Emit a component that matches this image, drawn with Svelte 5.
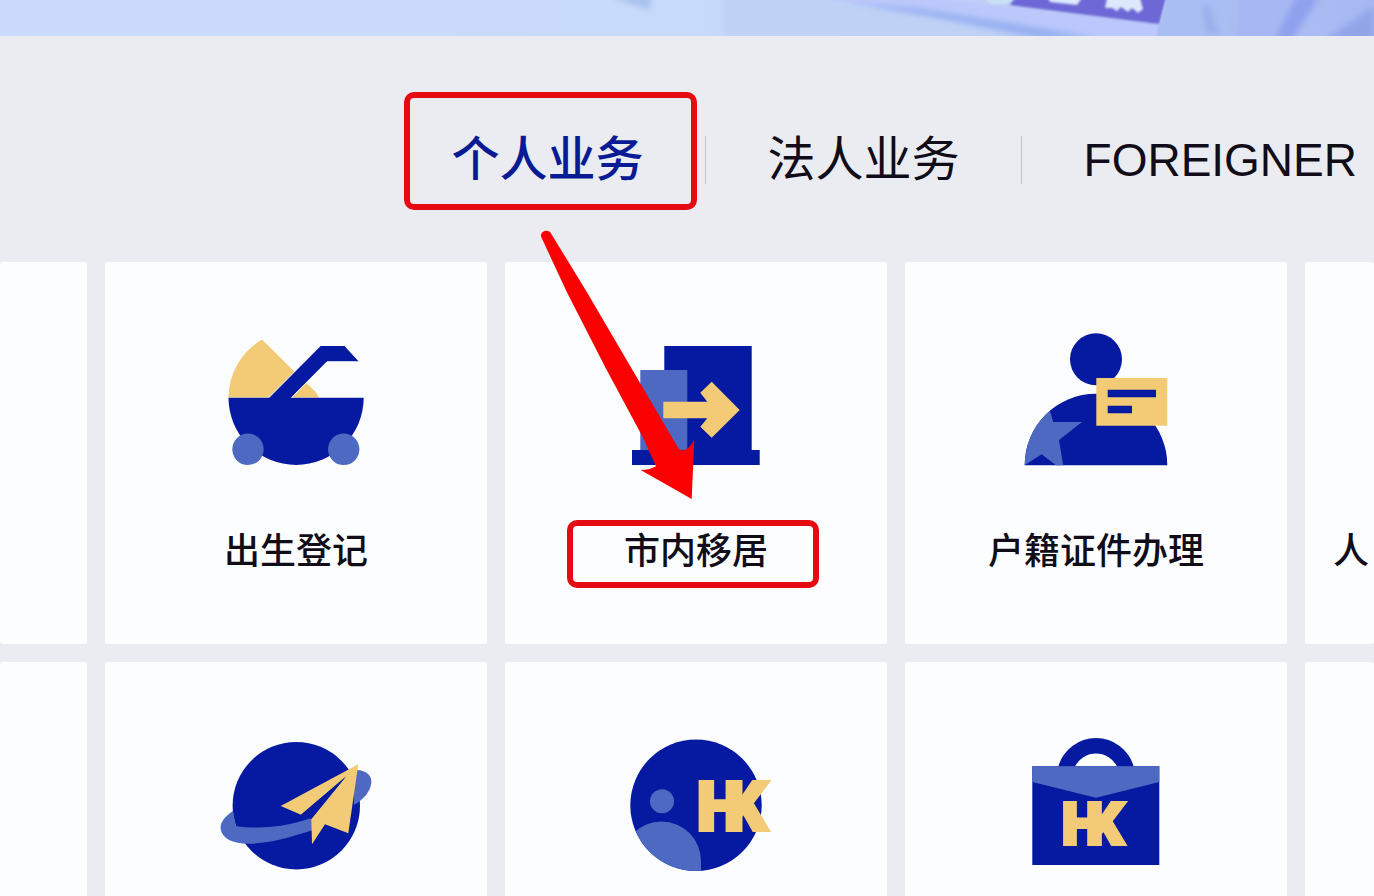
<script>
    let tabs = ['个人业务', '法人业务', 'FOREIGNER']
    let selectedTab = $state('个人业务')

    // the outer cards run off both sides of the page
    const services = [
        { icon: '', label: '' },
        { icon: 'pram', label: '出生登记' },
        { icon: 'door', label: '市内移居', marked: true },
        { icon: 'person', label: '户籍证件办理' },
        { icon: '', label: '人', cut: true },
        { icon: '', label: '' },
        { icon: 'planet', label: '' },
        { icon: 'traveller', label: '' },
        { icon: 'bag', label: '' },
        { icon: '', label: '' },
    ]
</script>

<div class="page">
    <header class="banner">
        <svg viewBox="0 0 1374 36" preserveAspectRatio="none" aria-hidden="true">
            <defs>
                <linearGradient id="sky" x1="0" x2="1" y1="0" y2="0">
                    <stop offset="0" stop-color="#cbdafc" />
                    <stop offset="0.5" stop-color="#c8dafa" />
                    <stop offset="0.75" stop-color="#bdcdf6" />
                    <stop offset="1" stop-color="#a5b8f2" />
                </linearGradient>
                <filter id="soft" x="-10%" y="-50%" width="120%" height="200%">
                    <feGaussianBlur stdDeviation="3" />
                </filter>
                <filter id="edge" x="-5%" y="-20%" width="110%" height="140%">
                    <feGaussianBlur stdDeviation="1" />
                </filter>
            </defs>
            <rect width="1374" height="36" fill="url(#sky)" />
            <path d="M608 -6L652 -6L650 10L630 4Z" fill="#a9c1ef" filter="url(#soft)" />
            <path d="M724 -4L840 -4L1010 36L724 36Z" fill="#bfd1f4" filter="url(#soft)" />
            <path d="M820 -2L930 -2L1158 24L1156 40L1070 40Z" fill="#bcc8fb" filter="url(#edge)" />
            <path d="M850 3L920 9L1100 38L1040 38L930 16Z" fill="#91aef0" filter="url(#soft)" />
            <path d="M1015 -2H1166L1159 24L1010 5Z" fill="#6d68d6" filter="url(#edge)" />
            <path d="M985 -2H1014L1006 4H990Z" fill="#c9e1f3" filter="url(#edge)" />
            <path d="M1048 -2H1082L1077 5L1050 2Z" fill="#dce8fb" filter="url(#edge)" />
            <path d="M1107 -2H1140L1143 9L1138 13L1132 8L1128 12L1121 7L1117 11L1112 8L1105 8Z" fill="#dce8fb" filter="url(#edge)" />
            <path d="M1166 -2H1234V38H1156Z" fill="#a9bef3" />
            <path d="M1202 8L1210 4L1214 22L1220 34H1207Z" fill="#99afea" filter="url(#soft)" />
            <path d="M1236 -4H1292L1274 40H1234Z" fill="#a6b7f4" filter="url(#soft)" />
            <path d="M1296 -4L1320 -4L1292 40L1274 40Z" fill="#8fa0ed" filter="url(#soft)" />
            <path d="M1374 6L1374 40L1325 40Z" fill="#91a4e8" filter="url(#soft)" />
        </svg>
    </header>

    <nav class="tabs">
        {#each tabs as tab, i}
            <button
                class="tab"
                class:selected={tab===selectedTab}
                class:latin={tab==='FOREIGNER'}
                onclick={()=>selectedTab=tab}
                >
                {tab}
                {#if i === 0}
                    <span class="mark tab-mark"></span>
                {/if}
            </button>
        {/each}
    </nav>

    <main class="services">
        {#each services as service}
            <a class="card" href="#service" aria-label={service.label || service.icon || 'service'}>
                <svg class="icon" viewBox="0 0 160 160" aria-hidden="true">
                    {#if service.icon === 'pram'}
                        <path class="gold" d="M12.5 75.5A67.5 67.5 0 0 1 46 17.5L90 61Q100 69 103 75.5Z" />
                        <path class="navy handle" d="M48.5 80L104.7 23.5H128.5L143.5 39.8H111L71 80Z" />
                        <path class="navy" d="M12.5 75.7H147.7A67.6 67.2 0 0 1 12.5 75.7Z" />
                        <circle class="blue" cx="32" cy="127.3" r="15.7" />
                        <circle class="blue" cx="127.7" cy="127.3" r="15.7" />
                    {:else if service.icon === 'door'}
                        <path class="navy" d="M48.3 24H135.7V128H143.7V143H16V128H48.3Z" />
                        <path class="blue" d="M24.3 48H71.3V128H24.3Z" />
                        <path class="gold" d="M47.3 79.7H91.3L84.3 70.7L95.7 59.7L123.7 88L95.7 115.7L84.3 104.7L91.3 96.3H47.3Z" />
                    {:else if service.icon === 'person'}
                        <clipPath id="shoulders">
                            <path d="M8.7 143.3A71.3 71.6 0 0 1 151.3 143.3Z" />
                        </clipPath>
                        <circle class="navy" cx="80" cy="37.3" r="26" />
                        <path class="navy" d="M8.7 143.3A71.3 71.6 0 0 1 151.3 143.3Z" />
                        <path class="blue" clip-path="url(#shoulders)" d="M33 86L37.3 100H66L43 118L47.3 144H41L25.7 132.3L9 143L0 143V86Z" />
                        <path class="gold" d="M80.3 56H151.3V103.7H80.3Z" />
                        <path class="navy" d="M91.7 67.7H140V75.3H91.7ZM91.7 83.7H116V91.3H91.7Z" />
                    {:else if service.icon === 'planet'}
                        <circle class="navy" cx="80.3" cy="83.7" r="63.7" />
                        <path class="blue" d="M17 89C8 95 4 101 4.7 107C6 117 18 122.5 36 121.7C58 120.5 78 114 97 108V95.3C75 104 45 108 20 104Q18 96 17 89Z" />
                        <path class="blue" d="M138 48H142C151 49 156 54 155.3 61C154 70 148 77 138 83Z" />
                        <path class="gold" d="M142.3 42.3L64.7 84L85 92.7L129.7 54.7L95.3 97L96 122.3L109 102.3L132.3 111.3Z" />
                        <path class="navy" d="M85 92.7L88 94.5L95.3 97L130 54.4Z" />
                    {:else if service.icon === 'traveller'}
                        <clipPath id="globe">
                            <circle cx="80" cy="83.3" r="65.7" />
                        </clipPath>
                        <circle class="navy" cx="80" cy="83.3" r="65.7" />
                        <circle class="blue" cx="46" cy="79.3" r="12" />
                        <path class="blue" clip-path="url(#globe)" d="M6 139A39.5 39.5 0 0 1 85 139V160H6Z" />
                        <text class="gold" font-size="67" x="81" y="108" dx="0 -20">HK</text>
                    {:else if service.icon === 'bag'}
                        <path class="navy" d="M42.3 44.5A39.2 39.2 0 0 1 117.7 44.5H101A23.5 23.5 0 0 0 59 44.5Z" />
                        <path class="navy" d="M16.3 44.3H143.3V143H16.3Z" />
                        <path class="blue" d="M16.3 44.3H143.3V60L80 75.7L16.3 60Z" />
                        <text class="gold" font-size="57" x="46" y="122" dx="0 -15">HK</text>
                    {/if}
                </svg>
                <span class="label" class:cut={service.cut}>
                    {service.label}
                    {#if service.marked}
                        <span class="mark label-mark"></span>
                    {/if}
                </span>
                {#if service.marked}
                    <svg class="pointer" viewBox="0 0 750 870" aria-hidden="true">
                        <path d="M34 52Q30 38 44 33Q57 29 64 42L170 215L325 480L445 685Q455 694 465 690Q482 682 493 658L485 837L332 750Q360 750 378 739L340 655L225 440L110 215Z" />
                    </svg>
                {/if}
            </a>
        {/each}
    </main>
</div>

<style>
    :global(body) {
        margin: 0;
        background: #eaecf1;
    }
    .page {
        height: 100vh;
        overflow: hidden;
        background: #eaecf1;
        font-family: "Liberation Sans", "Noto Sans CJK SC", sans-serif;
        color: #100c18;
    }
    .banner {
        height: 36px;
    }
    .banner svg {
        display: block;
        width: 100%;
        height: 100%;
    }
    .tabs {
        display: flex;
        justify-content: flex-end;
        padding: 100px 17px 78px 0;
    }
    .tab {
        position: relative;
        height: 48px;
        padding: 0 61px 0 62px;
        border: 0;
        border-right: 1px solid #c3c6cd;
        background: none;
        color: inherit;
        font-family: inherit;
        font-size: 48px;
        line-height: 48px;
        white-space: nowrap;
        cursor: pointer;
    }
    .tab:last-child {
        padding-right: 0;
        border-right: 0;
    }
    .tab.latin {
        font-size: 46px;
    }
    .tab.selected {
        color: #081a94;
        font-weight: 500;
    }
    .mark {
        position: absolute;
        border: 6px solid #e40b12;
        border-radius: 10px;
    }
    .tab-mark {
        inset: -44px 8px -26px 14px;
    }
    .label-mark {
        inset: -10px 68px -14px 62px;
    }
    .services {
        display: grid;
        grid-template-columns: 87px repeat(3, 1fr) 69px;
        gap: 18px;
    }
    .card {
        position: relative;
        display: flex;
        flex-direction: column;
        align-items: center;
        height: 382px;
        box-sizing: border-box;
        padding-top: 60px;
        border-radius: 3px;
        background: #fcfdff;
        color: inherit;
        text-decoration: none;
    }
    .icon {
        width: 160px;
        height: 160px;
        flex: none;
    }
    .icon text {
        font-family: Roboto, sans-serif;
        font-weight: 900;
        stroke: #f3ca76;
        stroke-width: 4;
    }
    .navy {
        fill: #051aa0;
    }
    .blue {
        fill: #4d69c1;
    }
    .gold {
        fill: #f3ca76;
    }
    .handle {
        stroke: #fcfdff;
        stroke-width: 1;
    }
    .label {
        position: relative;
        width: 100%;
        margin-top: 48px;
        font-size: 36px;
        font-weight: 500;
        line-height: 44px;
        text-align: center;
        white-space: nowrap;
    }
    .label.cut {
        box-sizing: border-box;
        padding-left: 28px;
        text-align: left;
    }
    .pointer {
        position: absolute;
        z-index: 1;
        top: -42px;
        left: 25px;
        width: 250px;
        height: 290px;
        fill: #fb0000;
    }
</style>
